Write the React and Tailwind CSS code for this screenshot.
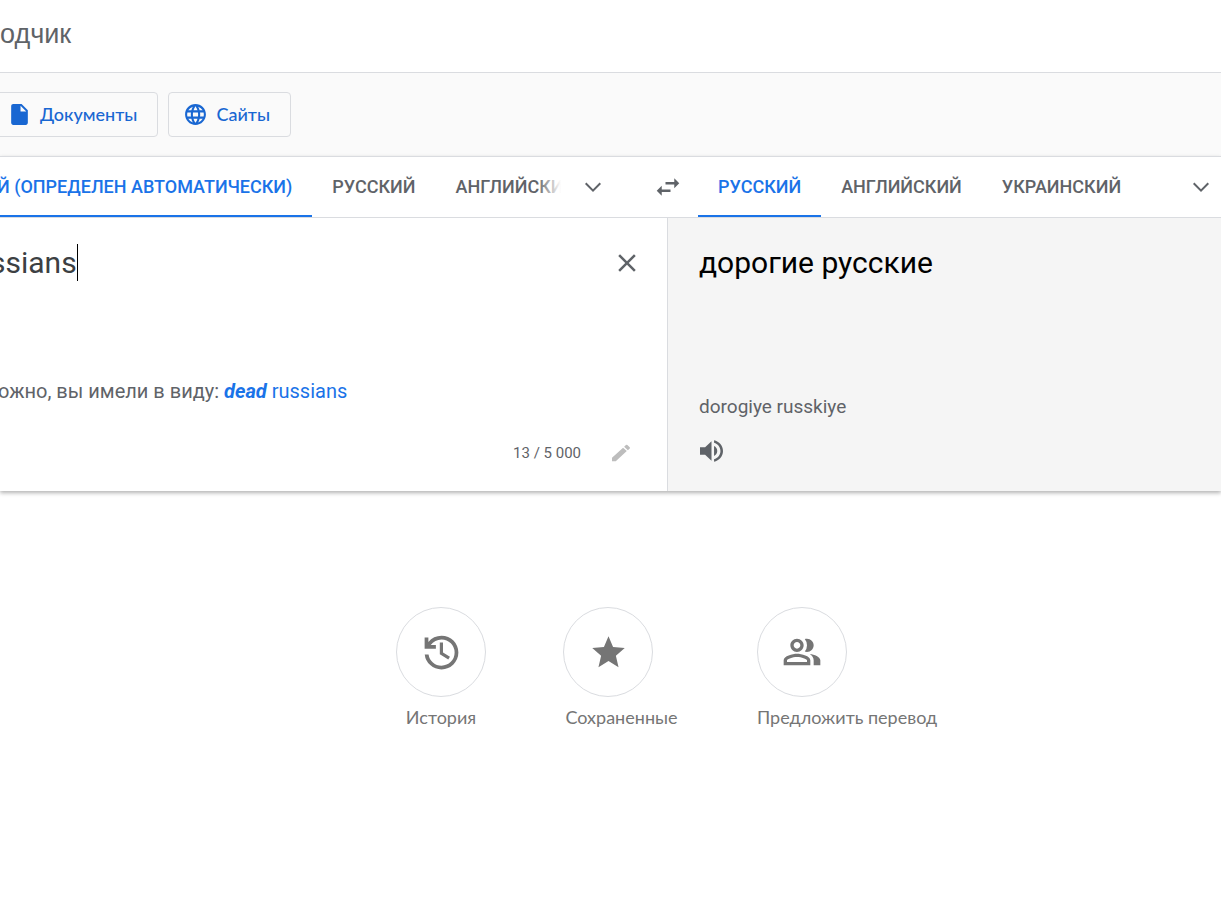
import { MdClose, MdInsertDriveFile, MdLanguage, MdOutlinePeopleAlt, MdStar } from 'react-icons/md'

const SOURCE_TABS = [
    { name: 'Й (ОПРЕДЕЛЕН АВТОМАТИЧЕСКИ)', active: true },
    { name: 'РУССКИЙ' },
    { name: 'АНГЛИЙСКИЙ' },
]

const TARGET_TABS = [
    { name: 'РУССКИЙ', active: true },
    { name: 'АНГЛИЙСКИЙ' },
    { name: 'УКРАИНСКИЙ' },
]

const ACTIONS = [
    { label: 'История', icon: <HistoryIcon /> },
    { label: 'Сохраненные', icon: <MdStar size={39} /> },
    { label: 'Предложить перевод', icon: <MdOutlinePeopleAlt size={40} /> },
]

export default function App() {
    return (
        <div className="min-h-screen overflow-x-hidden bg-white font-['Roboto',sans-serif] text-[#5f6368]">
            <header className="h-[72px] flex items-center pb-1">
                <h1 className="font-['Liberation_Sans',sans-serif] text-[27px] leading-8">одчик</h1>
            </header>

            <nav className="h-[84px] flex items-center gap-[10px] border-t border-[#dadce0] bg-[#fafafa]">
                <ModeButton icon={<MdInsertDriveFile size={25} />} label="Документы" cut />
                <ModeButton icon={<MdLanguage size={25} />} label="Сайты" />
            </nav>

            {/* Translation card */}
            <main className="shadow-[0_2px_4px_rgba(0,0,0,0.3)]">
                <div className="grid grid-cols-[638fr_60px_523fr] h-[62px] border-y border-[#dadce0] bg-white">
                    <div className="flex min-w-0 gap-3 pr-[25px]">
                        <div className="flex flex-1 min-w-0 overflow-hidden relative">
                            <div className="flex -ml-[23px]">
                                <Tabs tabs={SOURCE_TABS} />
                            </div>
                            <div className="absolute right-0 inset-y-0 w-6 bg-linear-to-r from-white/0 to-white" />
                        </div>
                        <IconButton label="Другие языки"><Chevron /></IconButton>
                    </div>
                    <button aria-label="Поменять языки местами" className="flex items-center justify-center">
                        <SwapIcon />
                    </button>
                    <div className="flex min-w-0">
                        <Tabs tabs={TARGET_TABS} />
                        <div className="ml-auto flex">
                            <IconButton label="Другие языки перевода"><Chevron /></IconButton>
                        </div>
                    </div>
                </div>

                <div className="grid grid-cols-[668fr_553fr] h-[273px]">
                    <section className="min-w-0 flex flex-col bg-white border-r border-[#dadce0]">
                        <div className="flex items-start pt-[26px] pr-[25px]">
                            <input aria-label="Исходный текст" defaultValue="ssians" className="field-sizing-content -ml-[10px] h-[37px] text-[30px] text-[#3c4043] outline-none" />
                            <span className="h-[37px] w-px bg-black" />
                            <button aria-label="Очистить" className="ml-auto mt-1"><MdClose size={30} /></button>
                        </div>
                        <p className="mt-auto -ml-0.5 text-[20px] leading-6 whitespace-nowrap">
                            ожно, вы имели в виду:{' '}
                            <a href="#" className="text-[#1a73e8]"><b className="italic">dead</b> russians</a>
                        </p>
                        <div className="mt-[35px] mb-[23px] pr-[34px] h-[30px] flex items-center justify-end gap-7">
                            <span className="text-[15px]">13 / 5 000</span>
                            <button aria-label="Рукописный ввод" className="text-[#bdbdbd]"><PencilIcon /></button>
                        </div>
                    </section>

                    <section className="min-w-0 flex flex-col bg-[#f5f5f5] pl-[31px]">
                        <p className="pt-[26px] text-[30px] leading-[37px] text-black">дорогие русские</p>
                        <p className="mt-auto text-[19px] leading-6">dorogiye russkiye</p>
                        <button aria-label="Прослушать" className="self-start pl-px mt-[21px] mb-[29px]"><SpeakerIcon /></button>
                    </section>
                </div>
            </main>

            <div className="pt-[116px] grid grid-cols-[90px_117px_auto] justify-start gap-[77px] pl-[396px]">
                {ACTIONS.map(action => (
                    <button key={action.label} className="text-[#757575] font-['Lato',sans-serif]">
                        <span className="size-[90px] rounded-full border border-[#dadce0] flex items-center justify-center">
                            {action.icon}
                        </span>
                        <span className="block mt-2 text-[18px] leading-6 whitespace-nowrap">{action.label}</span>
                    </button>
                ))}
            </div>
        </div>
    )
}

function ModeButton({ icon, label, cut }) {
    return (
        <button className={`h-[45px] flex items-center gap-2 pr-5 rounded border border-[#dadce0] text-[#1967d2] font-['Lato',sans-serif] font-medium text-[18px] ${cut ? '-ml-1 pl-[10px]' : 'pl-[14px]'}`}>
            {icon}
            {label}
        </button>
    )
}

function Tabs({ tabs }) {
    return tabs.map(tab => (
        <button key={tab.name} className={`shrink-0 px-5 border-b-2 text-[18px] font-medium whitespace-nowrap ${tab.active ? 'border-[#1a73e8] text-[#1a73e8]' : 'border-transparent'}`}>
            {tab.name}
        </button>
    ))
}

function IconButton({ label, children }) {
    return (
        <button aria-label={label} className="px-2 flex items-center">
            {children}
        </button>
    )
}

function Chevron() {
    return (
        <svg width="24" height="24" viewBox="0 0 24 24" fill="currentColor">
            <path d="M5.41 7.59L4 9l8 8 8-8-1.41-1.41L12 14.17z" />
        </svg>
    )
}

function SwapIcon() {
    return (
        <svg width="30" height="30" viewBox="0 0 24 24" fill="currentColor">
            <path d="M6.99 11L3 15l3.99 4v-3H14v-2H6.99v-3zM21 9l-3.99-4v3H10v2h7.01v3L21 9z" />
        </svg>
    )
}

function PencilIcon() {
    return (
        <svg width="24" height="22" viewBox="0 0 24 24" preserveAspectRatio="none" fill="currentColor">
            <path d="M3 17.25V21h3.75L17.81 9.94l-3.75-3.75L3 17.25zM20.71 7.04a.996.996 0 0 0 0-1.41l-2.34-2.34a.996.996 0 0 0-1.41 0l-1.83 1.83 3.75 3.75 1.83-1.83z" />
        </svg>
    )
}

function SpeakerIcon() {
    return (
        <svg width="23" height="22" viewBox="3 3 18 18" preserveAspectRatio="none" fill="currentColor">
            <path d="M3 9v6h4l5 5V4L7 9H3zm13.5 3c0-1.77-1.02-3.29-2.5-4.03v8.05c1.48-.73 2.5-2.25 2.5-4.02zM14 3.23v2.06c2.89.86 5 3.54 5 6.71s-2.11 5.85-5 6.71v2.06c4.01-.91 7-4.49 7-8.77s-2.99-7.86-7-8.77z" />
        </svg>
    )
}

function HistoryIcon() {
    return (
        <svg width="45" height="45" viewBox="0 0 24 24" fill="currentColor">
            <path transform="translate(0 24) scale(.025)" d="M480-120q-138 0-240.5-91.5T122-440h82q14 104 92.5 172T480-200q117 0 198.5-81.5T760-480q0-117-81.5-198.5T480-760q-69 0-129 32t-101 88h110v80H120v-240h80v94q51-64 124.5-99T480-840q75 0 140.5 28.5t114 77q48.5 48.5 77 114T840-480q0 75-28.5 140.5t-77 114q-48.5 48.5-114 77T480-120Z" />
            <path d="M11.1 6.7h1.7v5.3l3.7 2.3-.9 1.4-4.5-2.8z" />
        </svg>
    )
}
